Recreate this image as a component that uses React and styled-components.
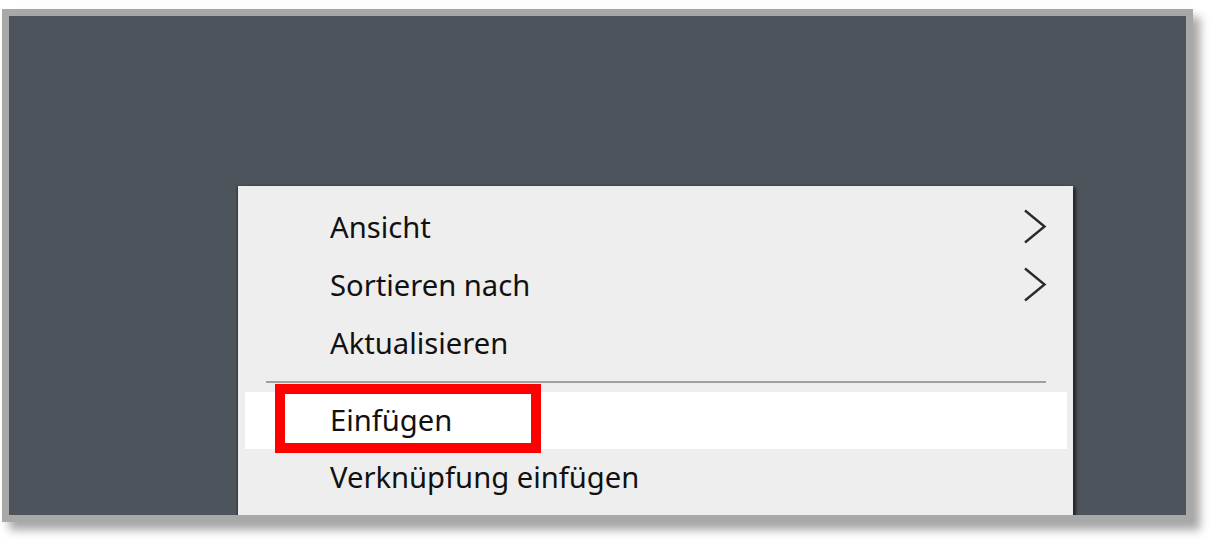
import styled, { createGlobalStyle } from "styled-components";

const GlobalStyle = createGlobalStyle`
  html, body {
    margin: 0;
    padding: 0;
    background: #ffffff;
  }
  body {
    font-family: "Noto Sans", "Open Sans", "Liberation Sans", sans-serif;
  }
`;

const Page = styled.div`
  width: 1210px;
  height: 548px;
  padding: 9px 0 0 2px;
  box-sizing: border-box;
`;

const Frame = styled.div`
  width: 1191px;
  height: 513px;
  box-sizing: border-box;
  border: 7px solid #a8a8a8;
  background: #4d545b;
  box-shadow: 7px 8px 9px rgba(0, 0, 0, 0.35);
  overflow: hidden;
  padding: 170px 0 0 229px;
`;

const Menu = styled.div`
  width: 835px;
  display: flex;
  flex-direction: column;
  background: #eeeeee;
  padding: 13px 0 40px;
  box-shadow: 3px 2px 3px rgba(0, 0, 0, 0.55), -1px 0 2px rgba(0, 0, 0, 0.35);
`;

const Item = styled.div`
  position: relative;
  height: ${({ $h }) => $h || 58}px;
  box-sizing: border-box;
  margin: 0 6px 0 7px;
  padding: 0 20px 2px 85px;
  display: flex;
  align-items: center;
  justify-content: space-between;
  background: ${({ $active }) => ($active ? "#ffffff" : "transparent")};
  color: #111111;
  font-size: 29.2px;
`;

const Separator = styled.div`
  height: 2px;
  background: #a0a0a0;
  margin: 8px 27px 9px 28px;
`;

const Highlight = styled.div`
  position: absolute;
  left: 30px;
  top: -8px;
  width: 266px;
  height: 69px;
  box-sizing: border-box;
  border: 10px solid #ff0000;
`;

const Chevron = () => (
  <svg width="24" height="36" viewBox="0 0 24 36">
    <path d="M2 1.5 L21.5 17.5 L2 33.5" fill="none" stroke="#2a2a2a" strokeWidth="2.4" />
  </svg>
);

export default function App() {
  return (
    <Page>
      <GlobalStyle />
      <Frame>
        <Menu>
          <Item>
            Ansicht
            <Chevron />
          </Item>
          <Item>
            Sortieren nach
            <Chevron />
          </Item>
          <Item>Aktualisieren</Item>
          <Separator />
          <Item $active $h={57}>
            Einfügen
            <Highlight />
          </Item>
          <Item>Verknüpfung einfügen</Item>
        </Menu>
      </Frame>
    </Page>
  );
}
